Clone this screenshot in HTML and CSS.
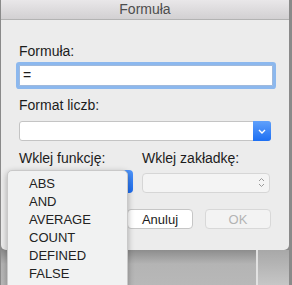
FILE: index.html
```html
<!DOCTYPE html>
<html>
<head>
    <title>Formuła</title>
    <link rel="stylesheet" href="styles.css">
</head>
<body>
    <div class="screen">
        <div class="dialog">
            <div class="titlebar">Formuła</div>
            <div class="content">
                <label class="label first" for="formula">Formuła:</label>
                <div class="field focused" id="formula">=</div>

                <label class="label" for="format">Format liczb:</label>
                <div class="select" id="format">
                    <span class="select-btn">
                        <svg width="8" height="5" viewBox="0 0 8 5"><path d="M1 1 L4 4 L7 1" fill="none" stroke="#fff" stroke-width="1.4"/></svg>
                    </span>
                </div>

                <div class="pair">
                    <div class="col">
                        <span class="label">Wklej funkcję:</span>
                        <div class="popup">
                            <span class="popup-btn"></span>
                        </div>
                    </div>
                    <div class="col right">
                        <span class="label">Wklej zakładkę:</span>
                        <div class="popup disabled">
                            <svg class="updown" width="7" height="11" viewBox="0 0 7 11"><path d="M1 4 L3.5 1.5 L6 4 M1 7 L3.5 9.5 L6 7" fill="none" stroke="#9a9a9a" stroke-width="1"/></svg>
                        </div>
                    </div>
                </div>

                <div class="buttons">
                    <button class="btn">Anuluj</button>
                    <button class="btn off">OK</button>
                </div>
            </div>
        </div>
        <div class="desk">
            <div class="desk-left"></div>
            <div class="desk-right"></div>
        </div>

        <ul class="menu">
            <li>ABS</li>
            <li>AND</li>
            <li>AVERAGE</li>
            <li>COUNT</li>
            <li>DEFINED</li>
            <li>FALSE</li>
        </ul>
    </div>
</body>
</html>
```

FILE: styles.css
```css
body {
    margin: 0;
    background-color: #8a8a8a;
    font-family: "Liberation Sans", Arial, sans-serif;
    font-size: 13px;
    color: #1c1c1c;
}
.screen {
    position: relative;
    width: 292px;
    height: 285px;
    overflow: hidden;
    background-color: #8a8a8a;
}
.dialog {
    margin-left: 1px;
    width: 288px;
    height: 250px;
    background-color: #ececec; /* window grey */
    border-radius: 0 0 5px 5px;
}
.titlebar {
    height: 19px;
    line-height: 19px;
    text-align: center;
    font-size: 14px;
    color: #4d4d4d;
    background: linear-gradient(#e9e7e9, #d2d0d2);
    border-bottom: 1px solid #b3b3b3;
}
.content {
    padding: 0 17px 0 18px;
}
.label {
    display: block;
    font-size: 14px;
    line-height: 16px;
    margin-top: 11px;
}
.label.first {
    margin-top: 23px;
}
.field {
    margin-top: 6px;
    height: 19px;
    width: 249px;
    line-height: 19px;
    padding-left: 3px;
    background-color: #fff;
    border: 1px solid #9fb9dc;
    font-size: 14px;
}
.focused {
    box-shadow: 0 0 0 3px #8cb8ee;
    border-radius: 1px;
}
.select {
    margin-top: 8px;
    display: flex;
    justify-content: flex-end;
    width: 250px;
    height: 18px;
    background-color: #fff;
    border: 1px solid #c4c4c4;
    border-radius: 3px;
}
.select-btn {
    display: flex;
    align-items: center;
    justify-content: center;
    width: 18px;
    margin: -1px -1px -1px 0;
    background: linear-gradient(#5fa0fb, #1d6ff3);
    border-radius: 0 3px 3px 0;
}
.pair {
    display: flex;
    gap: 9px;
}
.col {
    width: 114px;
}
.col.right {
    width: 128px;
}
.pair .label {
    margin-top: 9px;
}
.popup {
    position: relative;
    margin-top: 6px;
    height: 21px;
    border-radius: 4px;
    background-color: #fff;
    border: 1px solid #c8c8c8;
    box-sizing: border-box;
}
.popup-btn {
    position: absolute;
    right: -1px;
    top: -3px;
    bottom: -1px;
    width: 18px;
    background: linear-gradient(#4f95fa, #1c6cf0);
    border-radius: 0 4px 4px 0;
}
.popup.disabled {
    margin-top: 7px;
    height: 20px;
    background-color: #f4f4f4;
    border-color: #d6d6d6;
}
.updown {
    position: absolute;
    right: 4px;
    top: 3px;
}
.buttons {
    display: flex;
    justify-content: flex-end;
    gap: 12px;
    margin-top: 16px;
    padding-right: 1px;
}
.btn {
    width: 66px;
    height: 20px;
    padding: 0;
    font-family: inherit;
    font-size: 13px;
    color: #1c1c1c;
    background-color: #fff;
    border: 1px solid #c6c6c6;
    border-radius: 4px;
}
.btn.off {
    color: #b3b3b3;
    background-color: #f3f3f3;
    border-color: #d8d8d8;
}
.desk {
    display: flex;
    height: 35px;
    margin-left: 1px;
    width: 288px;
}
.desk-left {
    flex: 1;
    background: linear-gradient(#8d8d8d, #b4b4b4 40%, #b8b8b8);
}
.desk-right {
    width: 31px;
    background: linear-gradient(#a8a8a8, #c6c6c6);
    border-left: 2px solid #e2e2e2;
}
/* function list over the dialog */
.menu {
    position: absolute;
    left: 7px;
    top: 170px;
    width: 121px;
    height: 130px;
    margin: 0;
    padding: 4px 0 0;
    list-style: none;
    background-color: #f1f2f2;
    border: 1px solid #c9c9c9;
    border-radius: 5px 5px 0 0;
    box-sizing: border-box;
    box-shadow: 0 2px 6px rgba(0, 0, 0, 0.3);
}
.menu li {
    line-height: 18px;
    padding-left: 21px;
    color: #222;
}
```
